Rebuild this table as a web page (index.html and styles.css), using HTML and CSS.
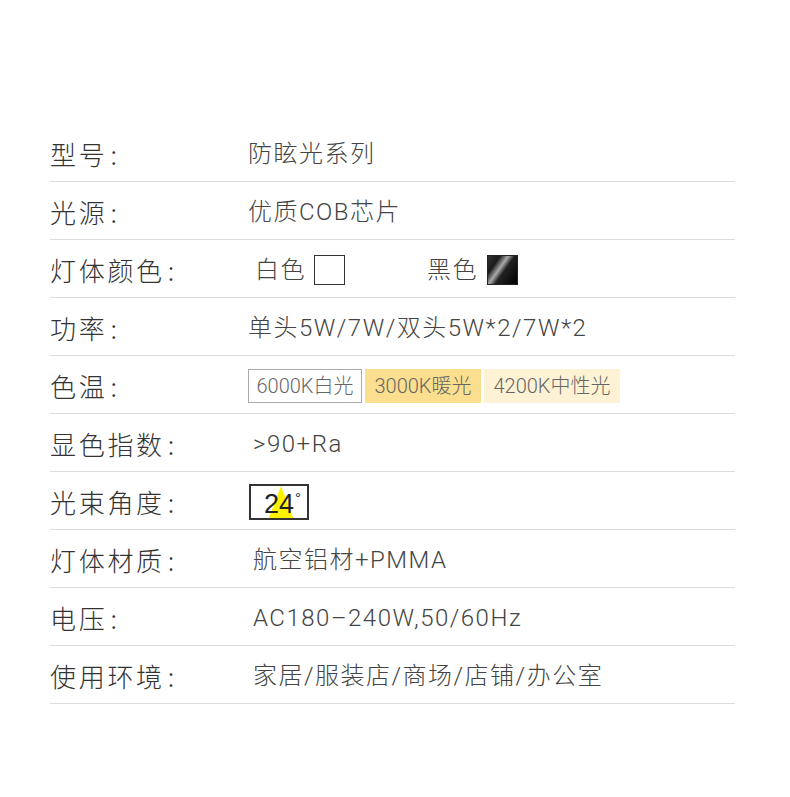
FILE: index.html
```html
<!DOCTYPE html>
<html lang="zh">
<head>
<meta charset="utf-8">
<link rel="stylesheet" href="styles.css">
</head>
<body>
<div class="spec">
  <div class="row"><div class="label">型号<span class="colon">:</span></div><div class="value">防眩光系列</div></div>
  <div class="row"><div class="label">光源<span class="colon">:</span></div><div class="value">优质COB芯片</div></div>
  <div class="row"><div class="label">灯体颜色<span class="colon">:</span></div>
    <div class="value colors">
      <span class="c-name">白色</span><span class="swatch white"></span>
      <span class="c-name black-name">黑色</span><span class="swatch black"></span>
    </div>
  </div>
  <div class="row"><div class="label">功率<span class="colon">:</span></div><div class="value">单头5W/7W/双头5W*2/7W*2</div></div>
  <div class="row"><div class="label">色温<span class="colon">:</span></div>
    <div class="value temps">
      <span class="temp t-white">6000K白光</span><span class="temp t-warm">3000K暖光</span><span class="temp t-neutral">4200K中性光</span>
    </div>
  </div>
  <div class="row"><div class="label">显色指数<span class="colon">:</span></div><div class="value shift">&gt;90+Ra</div></div>
  <div class="row"><div class="label">光束角度<span class="colon">:</span></div>
    <div class="value beam-cell">
      <span class="beam"><span class="tri"></span><span class="beam-text">24<sup>°</sup></span></span>
    </div>
  </div>
  <div class="row"><div class="label">灯体材质<span class="colon">:</span></div><div class="value shift">航空铝材+PMMA</div></div>
  <div class="row"><div class="label">电压<span class="colon">:</span></div><div class="value shift">AC180–240W,50/60Hz</div></div>
  <div class="row"><div class="label">使用环境<span class="colon">:</span></div><div class="value shift">家居/服装店/商场/店铺/办公室</div></div>
</div>
</body>
</html>
```
FILE: styles.css
```css
html, body {
  margin: 0;
  padding: 0;
  background: #fff;
}
body {
  font-family: "Noto Sans CJK SC", "Liberation Sans", sans-serif;
  color: #333;
}
.spec {
  width: 685px;
  margin-left: 50px;
  padding-top: 124px;
}
.row {
  display: flex;
  align-items: center;
  border-bottom: 1px solid #dcdcdc;
  padding-top: 3px;
  box-sizing: border-box;
  height: 58px;
}
.label {
  width: 198px;
  font-size: 26px;
  font-weight: 300;
  letter-spacing: 2.7px;
  color: #333;
  line-height: 1;
}
.colon {
  margin-left: 3px;
}
.value {
  font-family: "Roboto", "Noto Sans CJK SC", sans-serif;
  font-size: 24px;
  font-weight: 300;
  letter-spacing: 1.5px;
  color: #444;
  line-height: 1;
}
.shift {
  margin-left: 5px;
}
.colors {
  display: flex;
  align-items: center;
  margin-left: 7px;
}
.c-name {
  margin-right: 8px;
}
.black-name {
  margin-left: 82px;
}
.swatch {
  display: inline-block;
  width: 31px;
  height: 30px;
  box-sizing: border-box;
}
.white {
  border: 1px solid #333;
  background: #fff;
}
.black {
  border: 1px solid #222;
  margin-left: 1px;
  background: linear-gradient(125deg, #333 0%, #1a1a1a 25%, #aaa 42%, #222 55%, #000 100%);
}
.temps {
  display: flex;
  gap: 3px;
  margin-left: 0;
  letter-spacing: 0;
}
.temp {
  display: inline-flex;
  align-items: center;
  justify-content: center;
  height: 34px;
  font-size: 20px;
  color: #666;
  box-sizing: border-box;
}
.t-white {
  border: 1px solid #aaa;
  width: 114px;
}
.t-warm {
  background: #fcde8f;
  width: 116px;
}
.t-neutral {
  background: #fdf2d4;
  width: 136px;
}
.beam-cell {
  margin-left: 1px;
}
.beam {
  position: relative;
  display: inline-flex;
  justify-content: center;
  align-items: center;
  width: 60px;
  height: 36px;
  border: 2px solid #333;
  box-sizing: border-box;
  overflow: hidden;
}
.tri {
  position: absolute;
  left: 17px;
  top: 0;
  width: 0;
  height: 0;
  border-left: 13px solid transparent;
  border-right: 13px solid transparent;
  border-bottom: 34px solid #fff200;
}
.beam-text {
  position: relative;
  font-family: "Liberation Sans", sans-serif;
  font-size: 27px;
  color: #222;
  letter-spacing: 0;
  margin-top: 3px;
  margin-left: 7px;
}
.beam-text sup {
  font-size: 15px;
  vertical-align: 10px;
  margin-left: 1px;
}
```
